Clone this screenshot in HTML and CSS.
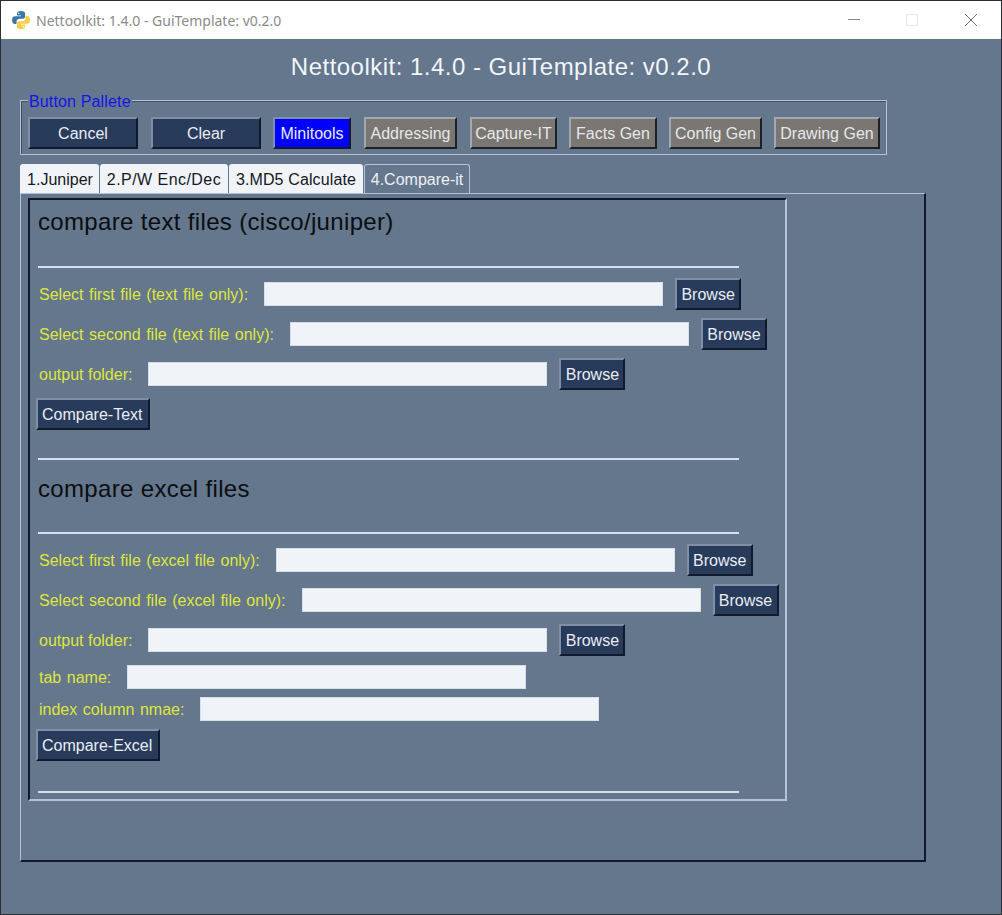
FILE: index.html
```html
<!DOCTYPE html>
<html lang="en">
<head>
<meta charset="utf-8">
<title>Nettoolkit: 1.4.0 - GuiTemplate: v0.2.0</title>
<link rel="stylesheet" href="styles.css">
</head>
<body>
<div class="window">
  <header class="titlebar">
    <svg class="pylogo" width="20" height="20" viewBox="0 0 20 20">
      <path fill="#3a76a8" d="M9.8 1C6.6 1 6 2.3 6 3.6V5.5h4v.7H4.100C2.300 6.200 1 7.500 1 10.100c0 2.700 1.200 4 2.900 4H5.500v-2.300c0-1.600 1.300-3 3-3h3.300c1.300 0 2.300-1 2.300-2.300V3.600C14.100 2 12.700 1 9.800 1z"/>
      <circle cx="7.800" cy="3.200" r=".8" fill="#fff"/>
      <path fill="#f5cf49" d="M10.200 19c3.200 0 3.800-1.300 3.800-2.600v-1.900h-4v-.7h5.900c1.800 0 3.100-1.300 3.100-3.900 0-2.700-1.200-4-2.900-4h-1.600v2.300c0 1.600-1.300 3-3 3H8.200c-1.300 0-2.300 1-2.300 2.300v3.900C5.900 18 7.300 19 10.200 19z"/>
      <circle cx="12.200" cy="16.800" r=".8" fill="#fff"/>
    </svg>
    <span class="wintitle">Nettoolkit: 1.4.0 - GuiTemplate: v0.2.0</span>
    <div class="controls">
      <svg class="ctl" width="12" height="12" viewBox="0 0 12 12"><path d="M0 5.500h12" stroke="#8a8a8a" fill="none"/></svg>
      <svg class="ctl" width="12" height="12" viewBox="0 0 12 12"><rect x=".5" y=".5" width="11" height="11" stroke="#e6e6e6" fill="none"/></svg>
      <svg class="ctl" width="14" height="14" viewBox="0 0 14 14"><path d="M1 1l12 12M13 1L1 13" stroke="#707070" fill="none"/></svg>
    </div>
  </header>
  <main class="body">
    <h1 class="apptitle">Nettoolkit: 1.4.0 - GuiTemplate: v0.2.0</h1>
    <div class="palette">
      <span class="legend">Button Pallete</span>
      <button class="btn navy w110">Cancel</button>
      <button class="btn navy w110 clear">Clear</button>
      <button class="btn blue w78 wider">Minitools</button>
      <button class="btn grey w93 wider">Addressing</button>
      <button class="btn grey w87">Capture-IT</button>
      <button class="btn grey w88">Facts Gen</button>
      <button class="btn grey w93">Config Gen</button>
      <button class="btn grey w106">Drawing Gen</button>
    </div>
    <nav class="tabs">
      <span class="tab t1">1.Juniper</span>
      <span class="tab t2">2.P/W Enc/Dec</span>
      <span class="tab t3">3.MD5 Calculate</span>
      <span class="tab active">4.Compare-it</span>
    </nav>
    <section class="tabpanel">
      <div class="inner">
        <h2 class="heading first">compare text files (cisco/juniper)</h2>
        <hr class="rule r1">
        <div class="row"><label>Select first file (text file only):</label><input class="field" type="text"><button class="btn navy browse">Browse</button></div>
        <div class="row"><label>Select second file (text file only):</label><input class="field" type="text"><button class="btn navy browse">Browse</button></div>
        <div class="row"><label class="tight">output folder:</label><input class="field" type="text"><button class="btn navy browse">Browse</button></div>
        <div class="row"><button class="btn navy action">Compare-Text</button></div>
        <hr class="rule r2">
        <h2 class="heading second">compare excel files</h2>
        <hr class="rule r3">
        <div class="row"><label>Select first file (excel file only):</label><input class="field" type="text"><button class="btn navy browse">Browse</button></div>
        <div class="row"><label>Select second file (excel file only):</label><input class="field" type="text"><button class="btn navy browse">Browse</button></div>
        <div class="row"><label class="tight">output folder:</label><input class="field" type="text"><button class="btn navy browse">Browse</button></div>
        <div class="row short"><label>tab name:</label><input class="field" type="text"></div>
        <div class="row short"><label>index column nmae:</label><input class="field" type="text"></div>
        <div class="row"><button class="btn navy action">Compare-Excel</button></div>
        <hr class="rule r4">
      </div>
    </section>
  </main>
</div>
</body>
</html>
```
FILE: styles.css
```css
* { box-sizing: border-box; }
html, body { margin: 0; padding: 0; }
body { width: 1002px; height: 915px; overflow: hidden; font-family: "Liberation Sans", Arial, sans-serif; }
.window { width: 1002px; height: 915px; display: flex; flex-direction: column; border: 1px solid #2b2f36; background: #64778d; }
.titlebar { height: 38px; flex: none; background: #fff; display: flex; align-items: center; padding-left: 10px; }
.pylogo { flex: none; }
.wintitle { margin-left: 5px; font-size: 14px; color: #8a8a8a; font-family: "Noto Sans", "Liberation Sans", sans-serif; white-space: nowrap; }
.controls { margin-left: auto; display: flex; align-items: center; height: 100%; }
.ctl { display: block; }
.controls .ctl:nth-child(1) { margin-right: 46px; }
.controls .ctl:nth-child(2) { margin-right: 46px; }
.controls .ctl:nth-child(3) { margin-right: 23px; }
.body { flex: 1; padding: 0 0 0 19px; min-height: 0; }
.apptitle { margin: 13px 0 0 -19px; width: 1000px; height: 30px; line-height: 30px; text-align: center; font-size: 24px; letter-spacing: .48px; font-weight: 400; color: #f2f5f9; }
.palette { position: relative; margin: 18px 0 0; padding: 16px 0 0 7px; width: 867px; height: 55px; border: 1px solid #b3c3d6; box-shadow: inset 1px 1px 0 #3f5068; display: flex; align-items: flex-start; }
.legend { position: absolute; left: 7px; top: -8px; padding: 0 1px; font-size: 16px; line-height: 18px; letter-spacing: .15px; color: #1414e6; background: #64778d; }
.btn { display: block; flex: none; height: 32px; padding: 1px 0 0; font-family: inherit; font-size: 16px; line-height: 1; color: #e9edf3; border: 2px solid; border-color: #7f90a6 #101a2c #101a2c #7f90a6; white-space: nowrap; }
.navy { background: #283b5b; }
.blue { background: #0000ff; }
.grey { background: #7a7672; color: #e6e8ea; border-color: #a3a8af #1c2029 #1c2029 #a3a8af; }
.palette .btn { margin-right: 12px; }
.palette .clear { margin-left: 1px; }
.palette .wider { margin-right: 13px; }
.palette .btn:last-child { margin-right: 0; }
.w110 { width: 110px; }
.w78 { width: 78px; }
.w93 { width: 93px; }
.w87 { width: 87px; }
.w88 { width: 88px; }
.w106 { width: 106px; }
.tabs { display: flex; margin-top: 9px; height: 29px; gap: 1px; }
.tab { display: flex; align-items: center; justify-content: center; height: 29px; padding-top: 2px; font-size: 16px; color: #15181d; background: #f0f3f8; border-radius: 3px 3px 0 0; white-space: nowrap; }
.t1 { width: 79px; padding-left: 1px; }
.t2 { width: 128px; letter-spacing: .45px; }
.t3 { width: 134px; letter-spacing: .13px; }
.tab.active { width: 106px; background: #64778d; color: #eef1f5; border: 1px solid #b3c3d6; border-bottom: 0; }
.tabpanel { width: 906px; height: 669px; padding: 4px 0 0 7px; border: 2px solid; border-color: #b3c3d6 #101a2c #101a2c #b3c3d6; border-width: 1px 2px 2px 1px; }
.inner { width: 759px; height: 603px; padding: 1px 0 0 6px; border: 2px solid; border-color: #101a2c #b3c3d6 #b3c3d6 #101a2c; }
.heading { margin: 0; font-size: 24px; line-height: 28px; font-weight: 400; letter-spacing: .34px; color: #0b0d10; padding-left: 2px; }
.heading.first { margin-top: 7px; }
.heading.second { margin-top: 15px; }
.rule { width: 701px; height: 2px; margin: 0 0 0 2px; border: 0; background: #d5e0ec; }
.r1 { margin-top: 30px; }
.r2 { margin-top: 28px; }
.r3 { margin-top: 29px; }
.r4 { margin-top: 30px; }
.row { display: flex; align-items: center; height: 32px; margin-top: 8px; }
.r1 + .row, .r3 + .row { margin-top: 10px; }
.row label { margin-left: 3px; margin-right: 16px; padding-top: 2px; font-size: 16px; word-spacing: 1.1px; color: #dfe63a; white-space: nowrap; }
.row label.tight { word-spacing: 0; }
.field { width: 399px; height: 24px; padding: 0; border: 1px solid #d9dfe7; background: #f0f3f8; }
.browse { width: 66px; margin-left: 12px; }
.action { padding: 1px 6px 0 4px; }
.short { height: 24px; }
.row + .short { margin-top: 9px; }
.short + .short { margin-top: 8px; }
```
